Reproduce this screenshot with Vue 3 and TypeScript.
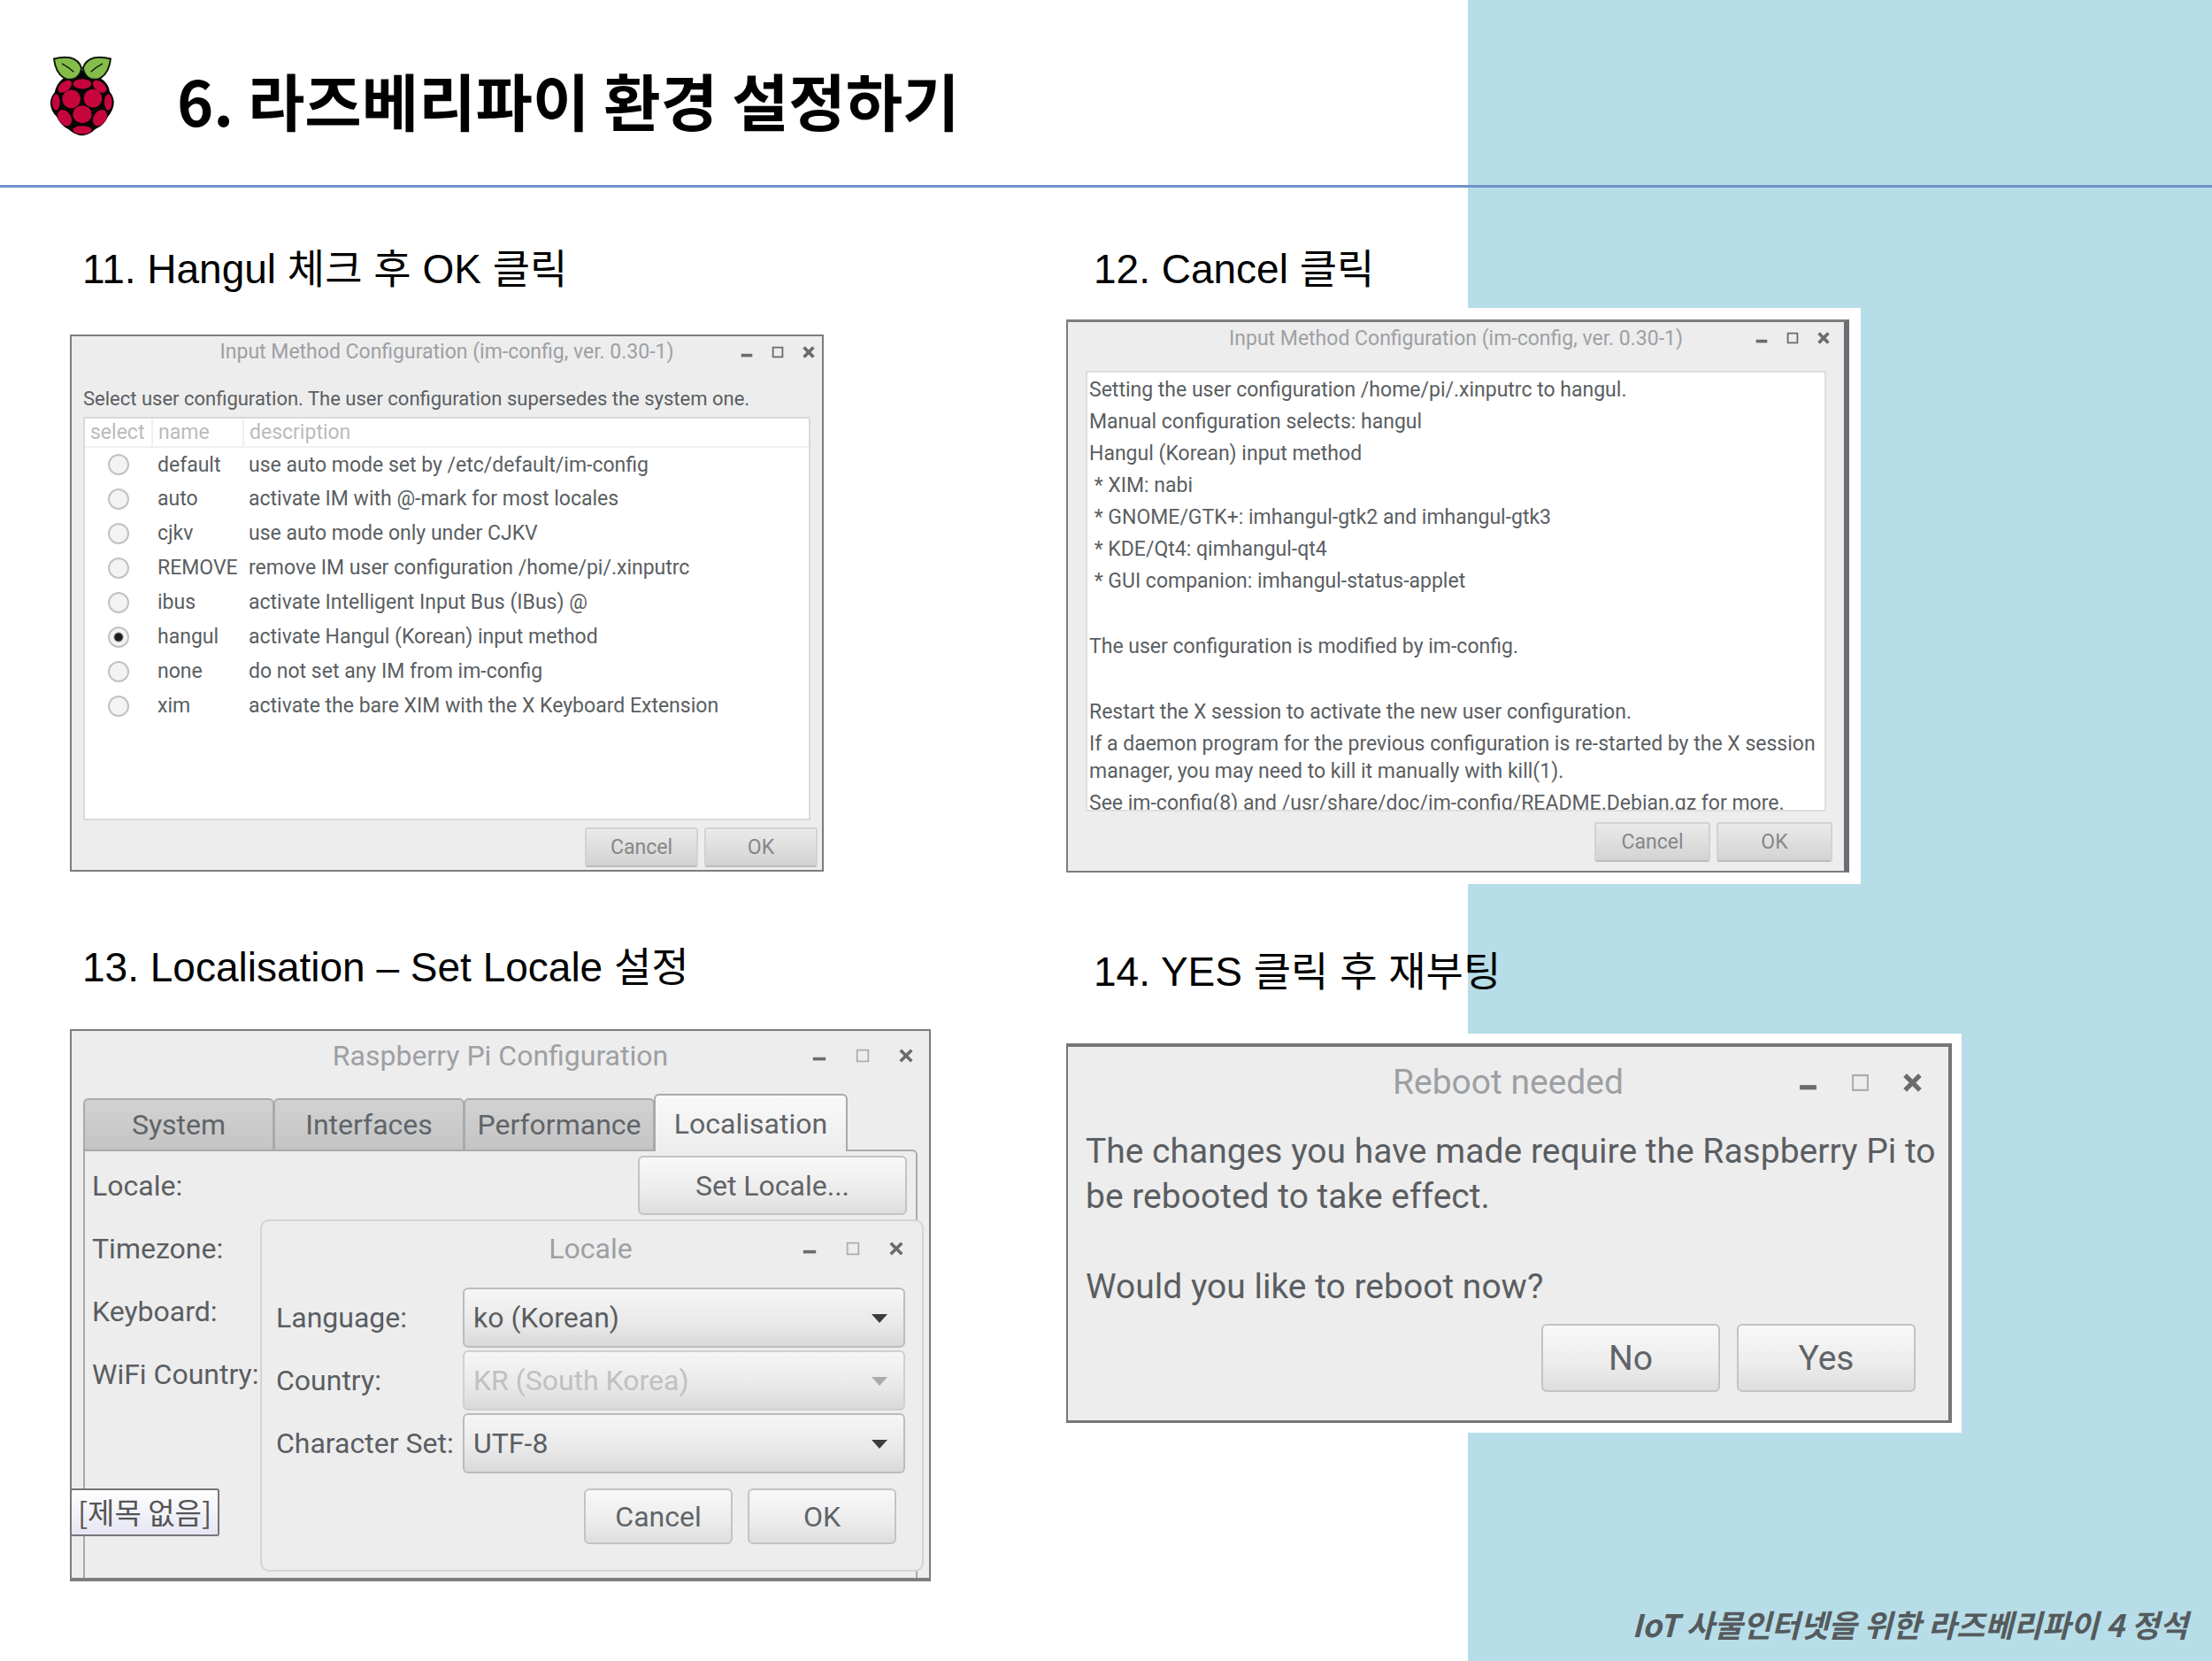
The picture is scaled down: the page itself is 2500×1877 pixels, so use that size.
<script setup lang="ts">
import { ref } from 'vue'

interface Method {
  name: string
  description: string
}

const methods: Method[] = [
  { name: 'default', description: 'use auto mode set by /etc/default/im-config' },
  { name: 'auto', description: 'activate IM with @-mark for most locales' },
  { name: 'cjkv', description: 'use auto mode only under CJKV' },
  { name: 'REMOVE', description: 'remove IM user configuration /home/pi/.xinputrc' },
  { name: 'ibus', description: 'activate Intelligent Input Bus (IBus) @' },
  { name: 'hangul', description: 'activate Hangul (Korean) input method' },
  { name: 'none', description: 'do not set any IM from im-config' },
  { name: 'xim', description: 'activate the bare XIM with the X Keyboard Extension' },
]
const selected = ref('hangul')

const log: string[] = [
  'Setting the user configuration /home/pi/.xinputrc to hangul.',
  'Manual configuration selects: hangul',
  'Hangul (Korean) input method',
  ' * XIM: nabi',
  ' * GNOME/GTK+: imhangul-gtk2 and imhangul-gtk3',
  ' * KDE/Qt4: qimhangul-qt4',
  ' * GUI companion: imhangul-status-applet',
  '',
  'The user configuration is modified by im-config.',
  '',
  'Restart the X session to activate the new user configuration.',
  'If a daemon program for the previous configuration is re-started by the X session manager, you may need to kill it manually with kill(1).',
  'See im-config(8) and /usr/share/doc/im-config/README.Debian.gz for more.',
]

const tabs: string[] = ['System', 'Interfaces', 'Performance', 'Localisation']
const activeTab = ref('Localisation')
const settings: string[] = ['Locale:', 'Timezone:', 'Keyboard:', 'WiFi Country:']

const fields = [
  { id: 'language', label: 'Language:', value: 'ko (Korean)', disabled: false },
  { id: 'country', label: 'Country:', value: 'KR (South Korea)', disabled: true },
  { id: 'charset', label: 'Character Set:', value: 'UTF-8', disabled: false },
]
</script>

<template>
  <div class="slide">
    <header class="head">
      <svg class="logo" viewBox="50 40 222 275" aria-hidden="true">
        <path
          d="M160 92 Q200 100 232 122 Q252 140 254 162 Q270 180 268 204 Q264 228 248 246 Q236 276 206 288 Q184 310 161 310 Q138 310 116 290 Q86 276 74 246 Q54 226 53 202 Q52 180 67 164 Q72 138 92 120 Q126 100 160 92Z"
          fill="#060606"
        />
        <g fill="#85bd4b" stroke="#10180a" stroke-width="6">
          <path d="M65 50 Q92 42 120 46 Q150 54 158 80 Q158 100 140 114 Q118 126 98 114 Q70 96 65 50Z" />
          <path d="M257 50 Q230 42 202 46 Q172 54 164 80 Q164 100 182 114 Q204 126 224 114 Q252 96 257 50Z" />
          <path d="M92 66 Q114 78 132 94 M230 66 Q208 78 190 94" fill="none" stroke-width="4" />
        </g>
        <path d="M140 118 Q154 104 161 86 Q168 104 184 118Z" fill="#060606" />
        <g fill="#c7053d">
          <ellipse cx="161" cy="135" rx="31" ry="17" />
          <ellipse cx="102" cy="144" rx="27" ry="16" transform="rotate(-38 102 144)" />
          <ellipse cx="220" cy="144" rx="27" ry="16" transform="rotate(38 220 144)" />
          <ellipse cx="124" cy="186" rx="31" ry="31" />
          <ellipse cx="197" cy="184" rx="31" ry="31" />
          <ellipse cx="72" cy="197" rx="13" ry="28" />
          <ellipse cx="249" cy="197" rx="13" ry="28" />
          <ellipse cx="161" cy="238" rx="32" ry="30" />
          <ellipse cx="101" cy="250" rx="21" ry="30" transform="rotate(-34 101 250)" />
          <ellipse cx="221" cy="250" rx="21" ry="30" transform="rotate(34 221 250)" />
          <ellipse cx="161" cy="291" rx="32" ry="14" />
        </g>
      </svg>
      <h1>6. 라즈베리파이 환경 설정하기</h1>
    </header>

    <main class="columns">
      <div class="column left">
        <section>
          <h2>11. Hangul 체크 후 OK 클릭</h2>
          <div class="window methods">
            <div class="titlebar">
              <span class="title">Input Method Configuration (im-config, ver. 0.30-1)</span>
              <div class="controls">
                <button type="button" aria-label="Minimize"><svg viewBox="0 0 20 20"><path d="M3 14h14" stroke-width="4" /></svg></button>
                <button type="button" aria-label="Maximize"><svg viewBox="0 0 20 20"><path d="M4 4h12v12H4z" stroke-width="2" /></svg></button>
                <button type="button" aria-label="Close"><svg viewBox="0 0 20 20"><path d="M4 4L16 16M16 4L4 16" stroke-width="4" /></svg></button>
              </div>
            </div>
            <p class="lead">Select user configuration. The user configuration supersedes the system one.</p>
            <div class="list">
              <table>
                <thead>
                  <tr><th class="c-select">select</th><th class="c-name">name</th><th>description</th></tr>
                </thead>
                <tbody>
                  <tr v-for="m in methods" :key="m.name">
                    <td class="c-select"><input :id="'m-' + m.name" v-model="selected" type="radio" name="method" :value="m.name" /></td>
                    <td class="c-name"><label :for="'m-' + m.name">{{ m.name }}</label></td>
                    <td>{{ m.description }}</td>
                  </tr>
                </tbody>
              </table>
            </div>
            <div class="actions">
              <button type="button" class="btn flat">Cancel</button>
              <button type="button" class="btn flat">OK</button>
            </div>
          </div>
        </section>

        <section>
          <h2>13. Localisation – Set Locale 설정</h2>
          <div class="window config">
            <div class="titlebar">
              <span class="title">Raspberry Pi Configuration</span>
              <div class="controls">
                <button type="button" aria-label="Minimize"><svg viewBox="0 0 20 20"><path d="M2 14h16" stroke-width="4" /></svg></button>
                <button type="button" class="thin" aria-label="Maximize"><svg viewBox="0 0 20 20"><path d="M3 3h14v14H3z" stroke-width="2" /></svg></button>
                <button type="button" aria-label="Close"><svg viewBox="0 0 20 20"><path d="M3 3L17 17M17 3L3 17" stroke-width="4" /></svg></button>
              </div>
            </div>
            <div class="tabs" role="tablist">
              <button
                v-for="t in tabs"
                :key="t"
                type="button"
                role="tab"
                :aria-selected="t === activeTab"
                :class="['tab', { active: t === activeTab }]"
                @click="activeTab = t"
              >{{ t }}</button>
            </div>
            <div class="page">
              <div v-for="(s, i) in settings" :key="s" class="setting">
                <span>{{ s }}</span>
                <button v-if="i === 0" type="button" class="btn">Set Locale...</button>
              </div>
            </div>

            <div class="locale">
              <div class="titlebar">
                <span class="title">Locale</span>
                <div class="controls">
                  <button type="button" aria-label="Minimize"><svg viewBox="0 0 20 20"><path d="M2 14h16" stroke-width="4" /></svg></button>
                  <button type="button" class="thin" aria-label="Maximize"><svg viewBox="0 0 20 20"><path d="M3 3h14v14H3z" stroke-width="2" /></svg></button>
                  <button type="button" aria-label="Close"><svg viewBox="0 0 20 20"><path d="M3 3L17 17M17 3L3 17" stroke-width="4" /></svg></button>
                </div>
              </div>
              <div class="fields">
                <template v-for="f in fields" :key="f.id">
                  <label :for="f.id">{{ f.label }}</label>
                  <div class="combo" :class="{ off: f.disabled }">
                    <select :id="f.id" :disabled="f.disabled"><option>{{ f.value }}</option></select>
                    <svg viewBox="0 0 18 10" aria-hidden="true"><path d="M0 0h18l-9 10z" /></svg>
                  </div>
                </template>
              </div>
              <div class="actions">
                <button type="button" class="btn">Cancel</button>
                <button type="button" class="btn">OK</button>
              </div>
            </div>
            <div class="tip" role="tooltip">[제목 없음]</div>
          </div>
        </section>
      </div>

      <div class="column right">
        <section>
          <h2>12. Cancel 클릭</h2>
          <div class="window result">
            <div class="titlebar">
              <span class="title">Input Method Configuration (im-config, ver. 0.30-1)</span>
              <div class="controls">
                <button type="button" aria-label="Minimize"><svg viewBox="0 0 20 20"><path d="M3 14h14" stroke-width="4" /></svg></button>
                <button type="button" aria-label="Maximize"><svg viewBox="0 0 20 20"><path d="M4 4h12v12H4z" stroke-width="2" /></svg></button>
                <button type="button" aria-label="Close"><svg viewBox="0 0 20 20"><path d="M4 4L16 16M16 4L4 16" stroke-width="4" /></svg></button>
              </div>
            </div>
            <div class="log">
              <p v-for="(line, i) in log" :key="i">{{ line }}</p>
            </div>
            <div class="actions">
              <button type="button" class="btn flat">Cancel</button>
              <button type="button" class="btn flat">OK</button>
            </div>
          </div>
        </section>

        <section>
          <h2>14. YES 클릭 후 재부팅</h2>
          <div class="window reboot">
            <div class="titlebar">
              <span class="title">Reboot needed</span>
              <div class="controls">
                <button type="button" aria-label="Minimize"><svg viewBox="0 0 20 20"><path d="M1 15h18" stroke-width="5" /></svg></button>
                <button type="button" class="thin" aria-label="Maximize"><svg viewBox="0 0 20 20"><path d="M2 2h16v16H2z" stroke-width="2" /></svg></button>
                <button type="button" aria-label="Close"><svg viewBox="0 0 20 20"><path d="M2 2L18 18M18 2L2 18" stroke-width="5" /></svg></button>
              </div>
            </div>
            <div class="message">
              <p>The changes you have made require the Raspberry Pi to be rebooted to take effect.</p>
              <p>Would you like to reboot now?</p>
            </div>
            <div class="actions">
              <button type="button" class="btn">No</button>
              <button type="button" class="btn">Yes</button>
            </div>
          </div>
        </section>
      </div>
    </main>

    <footer class="foot">IoT 사물인터넷을 위한 라즈베리파이 4 정석</footer>
  </div>
</template>

<style>
body {
  margin: 0;
}
</style>

<style scoped>
* {
  box-sizing: border-box;
}
.slide {
  min-height: 100vh;
  background: linear-gradient(to right, #fff 66.36%, #b7dde8 66.36%);
  color: #000;
  font-family: Roboto, "Noto Sans CJK KR", sans-serif;
}
h1,
h2,
p {
  margin: 0;
}
.head {
  display: flex;
  align-items: center;
  gap: 70px;
  height: 212px;
  padding: 8px 56px 0;
  border-bottom: 3px solid #6f93cb;
}
.logo {
  width: 74px;
  height: 92px;
}
h1 {
  padding-top: 8px;
  font: 700 70px/100px "Noto Sans CJK KR", sans-serif;
}
h2 {
  padding-left: 14px;
  font: 400 46px/60px "Liberation Sans", "Noto Sans CJK KR", sans-serif;
  white-space: nowrap;
}
.columns {
  display: grid;
  grid-template-columns: minmax(0, 1126fr) minmax(0, 1295fr);
  padding: 62px 0 0 79px;
}
.column {
  display: flex;
  flex-direction: column;
}
.left {
  gap: 78px;
}
.right {
  gap: 82px;
}
.right h2 {
  padding-left: 31px;
}

.window {
  position: relative;
  display: flex;
  flex-direction: column;
  max-width: 100%;
  border: 2px solid #7d7d7d;
  background: #ededed;
  color: #5a5e62;
}
.titlebar {
  position: relative;
  display: flex;
  align-items: center;
  justify-content: center;
  color: #9da0a4;
}
.controls {
  position: absolute;
  right: 6px;
  display: flex;
}
.controls button {
  display: flex;
  align-items: center;
  justify-content: center;
  width: 35px;
  height: 35px;
  padding: 0;
  border: 0;
  background: none;
}
.controls svg {
  width: 18px;
  height: 18px;
  fill: none;
  stroke: #6b6b6b;
}
.controls .thin svg {
  stroke: #adadad;
}
.actions {
  display: flex;
  justify-content: flex-end;
}
.btn {
  padding: 0;
  border: 2px solid #c3c3c3;
  border-radius: 6px;
  background: linear-gradient(#f8f8f8, #ececec 60%, #dedede);
  color: #606468;
  font: inherit;
}
.btn.flat {
  border-color: #d2d2d2;
  border-bottom-color: #bdbdbd;
  border-radius: 3px;
  background: linear-gradient(#eaeaea, #d3d3d3);
  color: #84878a;
}

.methods {
  width: 852px;
  margin-top: 44px;
  padding: 0 13px 3px;
  font-size: 23px;
}
.methods .titlebar {
  height: 35px;
}
.methods .controls {
  right: -15px;
}
.lead {
  margin-top: 20px;
  font-size: 22px;
  line-height: 32px;
}
.list {
  height: 456px;
  margin-top: 4px;
  border: 2px solid #d9d9d9;
  background: #fff;
}
table {
  width: 100%;
  border-collapse: collapse;
}
th,
td {
  height: 39px;
  padding: 0 0 0 6px;
  text-align: left;
  font-weight: 400;
  white-space: nowrap;
}
th {
  height: 32px;
  border-bottom: 2px solid #f0f0f0;
  border-right: 2px solid #f0f0f0;
  color: #b9bbbd;
}
th:last-child {
  border-right: 0;
}
.c-select {
  width: 76px;
}
td.c-select {
  padding: 0;
  text-align: center;
}
.c-name {
  width: 103px;
}
input[type="radio"] {
  display: block;
  width: 24px;
  height: 24px;
  margin: 0 auto;
  appearance: none;
  border: 2px solid #c2c2c2;
  border-radius: 50%;
  background: #f3f3f3;
}
input[type="radio"]:checked {
  background: radial-gradient(circle, #1d1d1d 4px, #f3f3f3 6px);
}
.methods .actions {
  gap: 7px;
  margin: 8px -8px 0 0;
}
.methods .btn,
.result .btn {
  width: 128px;
  height: 45px;
}

.result {
  width: 885px;
  margin-top: 27px;
  padding: 0 20px 10px;
  border-top-width: 3px;
  border-right: 6px solid #6b6d72;
  box-shadow: 0 0 0 13px #fff;
  font-size: 23px;
}
.result .titlebar {
  height: 36px;
}
.result .controls {
  right: -14px;
}
.log {
  height: 498px;
  margin-top: 19px;
  padding: 4px 2px 0;
  overflow: hidden;
  border: 2px solid #dedede;
  background: #fff;
  line-height: 31px;
  white-space: pre-wrap;
}
.log p {
  margin: 0 -4px 5px 0;
}
.log p:empty {
  height: 33px;
}
.result .actions {
  gap: 7px;
  margin: 12px -7px 0 0;
}
.result .btn {
  width: 131px;
}

.config {
  width: 973px;
  height: 624px;
  margin-top: 40px;
  padding: 0 13px;
  border-bottom-width: 4px;
  font-size: 32px;
}
.config .titlebar {
  height: 56px;
}
.config .controls button {
  width: 49px;
}
.config > .titlebar .controls {
  right: -11px;
}
.tabs {
  z-index: 1;
  display: flex;
  align-items: flex-end;
  margin: 15px 0 -2px;
}
.tab {
  width: 216px;
  height: 60px;
  padding: 0;
  margin-right: -1px;
  border: 2px solid #aaa;
  border-radius: 6px 6px 0 0;
  background: linear-gradient(#d2d2d2, #c4c4c4);
  color: #606468;
  font: inherit;
}
.tab.active {
  width: 219px;
  height: 65px;
  border-bottom: 0;
  background: linear-gradient(#f9f9f9, #ededed);
}
.page {
  flex: 1;
  padding: 3px 10px 0 8px;
  border: 2px solid #aaa;
  border-bottom: 0;
  border-radius: 0 6px 0 0;
}
.setting {
  display: flex;
  align-items: center;
  justify-content: space-between;
  height: 71px;
}
.setting .btn {
  width: 304px;
  height: 67px;
}
.locale {
  position: absolute;
  z-index: 2;
  top: 213px;
  left: 213px;
  width: 750px;
  height: 398px;
  padding: 0 19px 0 16px;
  border: 2px solid #d4d4d4;
  border-radius: 10px;
  background: #ededed;
}
.locale .titlebar {
  height: 62px;
}
.locale .controls {
  right: -14px;
}
.fields {
  display: grid;
  grid-template-columns: 211px 1fr;
  align-items: center;
  row-gap: 3px;
  padding-top: 13px;
  white-space: nowrap;
}
.combo {
  position: relative;
}
select {
  display: block;
  width: 100%;
  height: 68px;
  padding: 0 48px 0 10px;
  appearance: none;
  border: 2px solid #bcbcbc;
  border-radius: 6px;
  background: linear-gradient(#f6f6f6, #e9e9e9 60%, #d9d9d9);
  color: #5a5e62;
  font: inherit;
  opacity: 1;
}
.combo svg {
  position: absolute;
  top: 30px;
  right: 20px;
  width: 18px;
  height: 10px;
  fill: #3a3d40;
}
.off select {
  border-color: #cfcfcf;
  color: #bfc1c2;
}
.off svg {
  fill: #a9abac;
}
.locale .actions {
  gap: 17px;
  margin: 17px 10px 0 0;
}
.locale .btn {
  width: 168px;
  height: 63px;
}
.tip {
  position: absolute;
  z-index: 3;
  top: 517px;
  left: -2px;
  width: 169px;
  height: 54px;
  border: 2px solid #76767a;
  border-radius: 3px;
  background: linear-gradient(#fff, #e6e6f3);
  color: #555;
  font: 400 33px/48px "Noto Sans CJK KR", sans-serif;
  text-align: center;
  white-space: nowrap;
}

.reboot {
  width: 1001px;
  margin-top: 51px;
  padding: 0 20px 32px;
  border-width: 4px 4px 3px 2px;
  border-color: #77777a;
  box-shadow: 0 0 0 11px #fff;
  font-size: 39px;
}
.reboot .titlebar {
  height: 80px;
}
.reboot .controls {
  right: -9px;
}
.reboot .controls button {
  width: 59px;
}
.reboot .controls svg {
  width: 21px;
  height: 21px;
}
.message {
  margin: 13px -12px 0 0;
  line-height: 51px;
}
.message p + p {
  margin-top: 51px;
}
.reboot .actions {
  gap: 19px;
  margin: 16px 17px 0 0;
}
.reboot .btn {
  width: 202px;
  height: 77px;
}

.foot {
  padding: 24px 27px 18px 0;
  color: #555a5d;
  font: italic 700 35px/48px "Noto Sans CJK KR", sans-serif;
  text-align: right;
}
</style>
